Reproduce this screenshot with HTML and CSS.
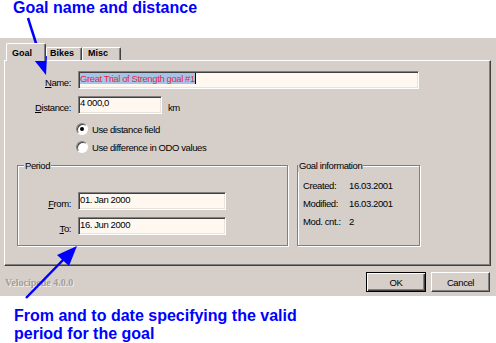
FILE: index.html
```html
<!DOCTYPE html>
<html lang="en">

<head>
    <meta charset="UTF-8">
    <title>Goal</title>
    <link rel="stylesheet" href="styles.css">
</head>

<body>

    <div class="note note-top">Goal name and distance</div>

    <div class="dialog">
        <div class="tabs">
            <div class="tab tab-active">Goal</div>
            <div class="tab tab-bikes">Bikes</div>
            <div class="tab tab-misc">Misc</div>
        </div>

        <div class="panel">
            <div class="field">
                <label class="field-label"><u>N</u>ame:</label>
                <div class="edit edit-name"><span class="sel">Great Trial of Strength goal #1</span></div>
            </div>
            <div class="field field-next">
                <label class="field-label"><u>D</u>istance:</label>
                <div class="edit edit-distance">4 000,0</div>
                <span class="unit">km</span>
            </div>

            <div class="options">
                <div class="option"><span class="radio checked"></span>Use distance field</div>
                <div class="option"><span class="radio"></span>Use difference in ODO values</div>
            </div>

            <div class="groups">
                <div class="group group-period">
                    <div class="group-title">Period</div>
                    <div class="field field-first">
                        <label class="field-label"><u>F</u>rom:</label>
                        <div class="edit edit-date">01. Jan 2000</div>
                    </div>
                    <div class="field field-next">
                        <label class="field-label"><u>T</u>o:</label>
                        <div class="edit edit-date">16. Jun 2000</div>
                    </div>
                </div>

                <div class="group group-info">
                    <div class="group-title">Goal information</div>
                    <div class="info-rows">
                        <div class="info-row"><span class="info-label">Created:</span><span>16.03.2001</span></div>
                        <div class="info-row"><span class="info-label">Modified:</span><span>16.03.2001</span></div>
                        <div class="info-row"><span class="info-label">Mod. cnt.:</span><span>2</span></div>
                    </div>
                </div>
            </div>
        </div>

        <div class="footer">
            <div class="brand">Velocipede 4.0.0</div>
            <button type="button" class="btn btn-default">OK</button>
            <button type="button" class="btn">Cancel</button>
        </div>
    </div>

    <div class="note note-bottom">From and to date specifying the valid<br>period for the goal</div>

    <!-- annotation arrows drawn over the dialog -->
    <svg class="arrows" width="496" height="343" viewBox="0 0 496 343">
        <line x1="28" y1="18" x2="41" y2="59" stroke="#0000ff" stroke-width="2.5" />
        <polygon points="46,75 34,60 47,56" fill="#0000ff" />
        <line x1="26" y1="298" x2="64" y2="259" stroke="#0000ff" stroke-width="2.5" />
        <polygon points="77,246 57,255 69,266" fill="#0000ff" />
    </svg>

</body>

</html>
```

FILE: styles.css
```css
body {
    margin: 0;
    width: 496px;
    height: 343px;
    position: relative;
    background-color: #fff;
    font-family: "Liberation Sans", Arial, sans-serif;
    overflow: hidden;
}

.note {
    color: #0000ff;
    font-weight: bold;
    font-size: 16px;
}

.note-top {
    height: 38px;
    padding-left: 13px;
    line-height: 16px;
}

.note-bottom {
    margin-top: 11px;
    padding-left: 14px;
    line-height: 18px;
}

.dialog {
    height: 258px;
    box-sizing: border-box;
    padding-top: 5px;
    background-color: #d6cfc9;
    font-size: 9.5px;
    letter-spacing: -0.4px;
    color: #000;
}

/* tabs */
.tabs {
    display: flex;
    align-items: flex-end;
    padding-left: 6px;
}

.tab {
    box-sizing: border-box;
    height: 13px;
    padding: 0 0 2px 5px;
    font-weight: bold;
    font-size: 9px;
    letter-spacing: 0;
    line-height: 10px;
    border-top: 1px solid #fff;
    border-left: 1px solid #fff;
    border-right: 1px solid #404040;
    border-radius: 2px 2px 0 0;
    box-shadow: inset -1px 0 0 #808080;
}

.tab-active {
    position: relative;
    z-index: 1;
    width: 40px;
    height: 18px;
    padding-top: 4px;
    margin-bottom: -1px;
    background-color: #d6cfc9;
}

.tab-bikes {
    width: 36px;
    padding-left: 3px;
}

.tab-misc {
    width: 39px;
}

.panel {
    width: 487px;
    height: 206px;
    box-sizing: border-box;
    margin-left: 4px;
    padding-top: 10px;
    border-top: 1px solid #fff;
    border-left: 1px solid #fff;
    border-right: 1px solid #404040;
    border-bottom: 1px solid #404040;
    box-shadow: inset -1px -1px 0 #808080;
}

/* label + edit rows */
.field {
    display: flex;
    align-items: flex-start;
}

.field-next {
    margin-top: 7px;
}

.field-label {
    width: 66px;
    margin-right: 7px;
    padding-top: 6px;
    line-height: 12px;
    text-align: right;
}

.edit {
    height: 18px;
    box-sizing: border-box;
    padding: 1px 0 0 1px;
    line-height: 10px;
    white-space: nowrap;
    background-color: #fff8f0;
    border-top: 1px solid #808080;
    border-left: 1px solid #808080;
    border-right: 1px solid #fff;
    border-bottom: 1px solid #fff;
    box-shadow: inset 1px 1px 0 #404040, inset -1px -1px 0 #e8e2dc;
}

.edit-name {
    width: 341px;
}

.sel {
    display: inline-block;
    padding-top: 1px;
    height: 10px;
    background-color: #a6c4ea;
    color: #e8283c;
    border-right: 1px solid #000;
}

.edit-distance {
    width: 84px;
}

.edit-date {
    width: 148px;
    padding-top: 2px;
}

.unit {
    margin-left: 6px;
    padding-top: 6px;
    line-height: 12px;
}

/* radio buttons */
.options {
    margin-top: 6px;
    padding-left: 71px;
}

.option {
    display: flex;
    align-items: center;
    height: 18px;
}

.radio {
    width: 12px;
    height: 12px;
    box-sizing: border-box;
    margin-right: 4px;
    border-radius: 50%;
    border: 1px solid;
    border-color: #808080 #fff #fff #808080;
    background-color: #fff;
    box-shadow: inset 1px 1px 0 #404040;
}

.radio.checked::after {
    content: "";
    display: block;
    width: 4px;
    height: 4px;
    margin: 3px auto 0;
    border-radius: 50%;
    background-color: #000;
}

/* group boxes */
.groups {
    display: flex;
    gap: 9px;
    margin: 9px 0 0 12px;
}

.group {
    box-sizing: border-box;
    border: 1px solid #808080;
    box-shadow: inset 1px 1px 0 #fff, 1px 1px 0 #fff;
}

.group-title {
    width: fit-content;
    margin-top: -7px;
    padding: 0 1px;
    line-height: 13px;
    background-color: #d6cfc9;
}

.group-period {
    width: 271px;
    padding-bottom: 10px;
}

.group-period .group-title {
    margin-left: 6px;
}

.group-period .field-label {
    width: 53px;
}

.field-first {
    margin-top: 20px;
}

.group-info {
    width: 123px;
}

.info-rows {
    margin-top: 5px;
    padding-left: 5px;
}

.info-row {
    display: flex;
    line-height: 18px;
}

.info-label {
    width: 46px;
}

/* bottom bar */
.footer {
    display: flex;
    align-items: center;
    gap: 5px;
    margin-top: 6px;
    padding: 0 6px 0 5px;
}

.brand {
    flex: 1;
    font-family: "Liberation Serif", "Times New Roman", serif;
    font-weight: bold;
    font-size: 10px;
    letter-spacing: 0;
    color: #a39d97;
    text-shadow: 1px 1px 0 #f2eeea;
}

.btn {
    width: 59px;
    height: 20px;
    box-sizing: border-box;
    padding: 0;
    font-family: inherit;
    font-size: 9.5px;
    letter-spacing: -0.4px;
    color: #000;
    background-color: #d6cfc9;
    border-top: 1px solid #fff;
    border-left: 1px solid #fff;
    border-right: 1px solid #404040;
    border-bottom: 1px solid #404040;
    box-shadow: inset -1px -1px 0 #808080;
}

.btn-default {
    width: 60px;
    border: 1px solid #000;
    box-shadow: inset 1px 1px 0 #fff, inset -1px -1px 0 #404040, inset -2px -2px 0 #808080;
}

.arrows {
    position: absolute;
    left: 0;
    top: 0;
    pointer-events: none;
}
```
